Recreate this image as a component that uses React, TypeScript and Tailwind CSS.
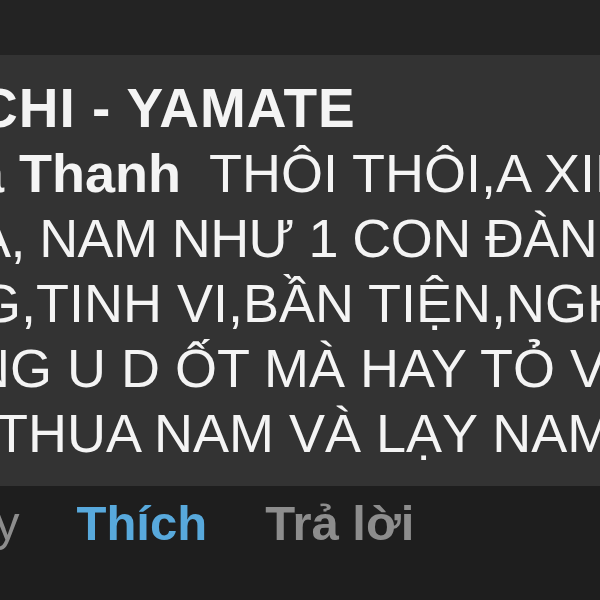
import React from 'react';

const lines = [
  { text: 'A, NAM NHƯ 1 CON ĐÀN BÀ', offset: '-ml-[25px] tracking-[-0.6px]' },
  { text: 'G,TINH VI,BẦN TIỆN,NGHÈO', offset: '-ml-[21px]' },
  { text: 'NG U D ỐT MÀ HAY TỎ VẺ', offset: '-ml-[29px]' },
  { text: 'THUA NAM VÀ LẠY NAM', offset: '-ml-[5px]' },
];

export default function App() {
  return (
    <div className="w-[600px] h-[600px] overflow-hidden bg-[#1e1e1e] font-['Liberation_Sans',Arial,sans-serif]">
      <div className="h-[55px] bg-[#232323]" />

      {/* comment bubble, cropped on both sides */}
      <div className="h-[431px] bg-[#333333] pt-[21px] text-[54px] leading-[65px] text-[#f4f4f4] whitespace-nowrap">
        <div className="-ml-[22px] text-[55px] font-bold tracking-[1px]">CHI - YAMATE</div>
        <div className="-ml-[26px]">
          <span className="font-bold">a Thanh</span>
          <span className="ml-[28px]">THÔI THÔI,A XIN</span>
        </div>
        {lines.map((l) => (
          <div key={l.text} className={l.offset}>
            {l.text}
          </div>
        ))}
      </div>

      <div className="flex pt-[7px] text-[49px] leading-[60px] font-bold whitespace-nowrap">
        <span className="-ml-[5px] font-normal text-[#8d8d8d]">y</span>
        <span className="ml-[57px] text-[#58a9dc]">Thích</span>
        <span className="ml-[58px] text-[#8d8d8d]">Trả lời</span>
      </div>
    </div>
  );
}
